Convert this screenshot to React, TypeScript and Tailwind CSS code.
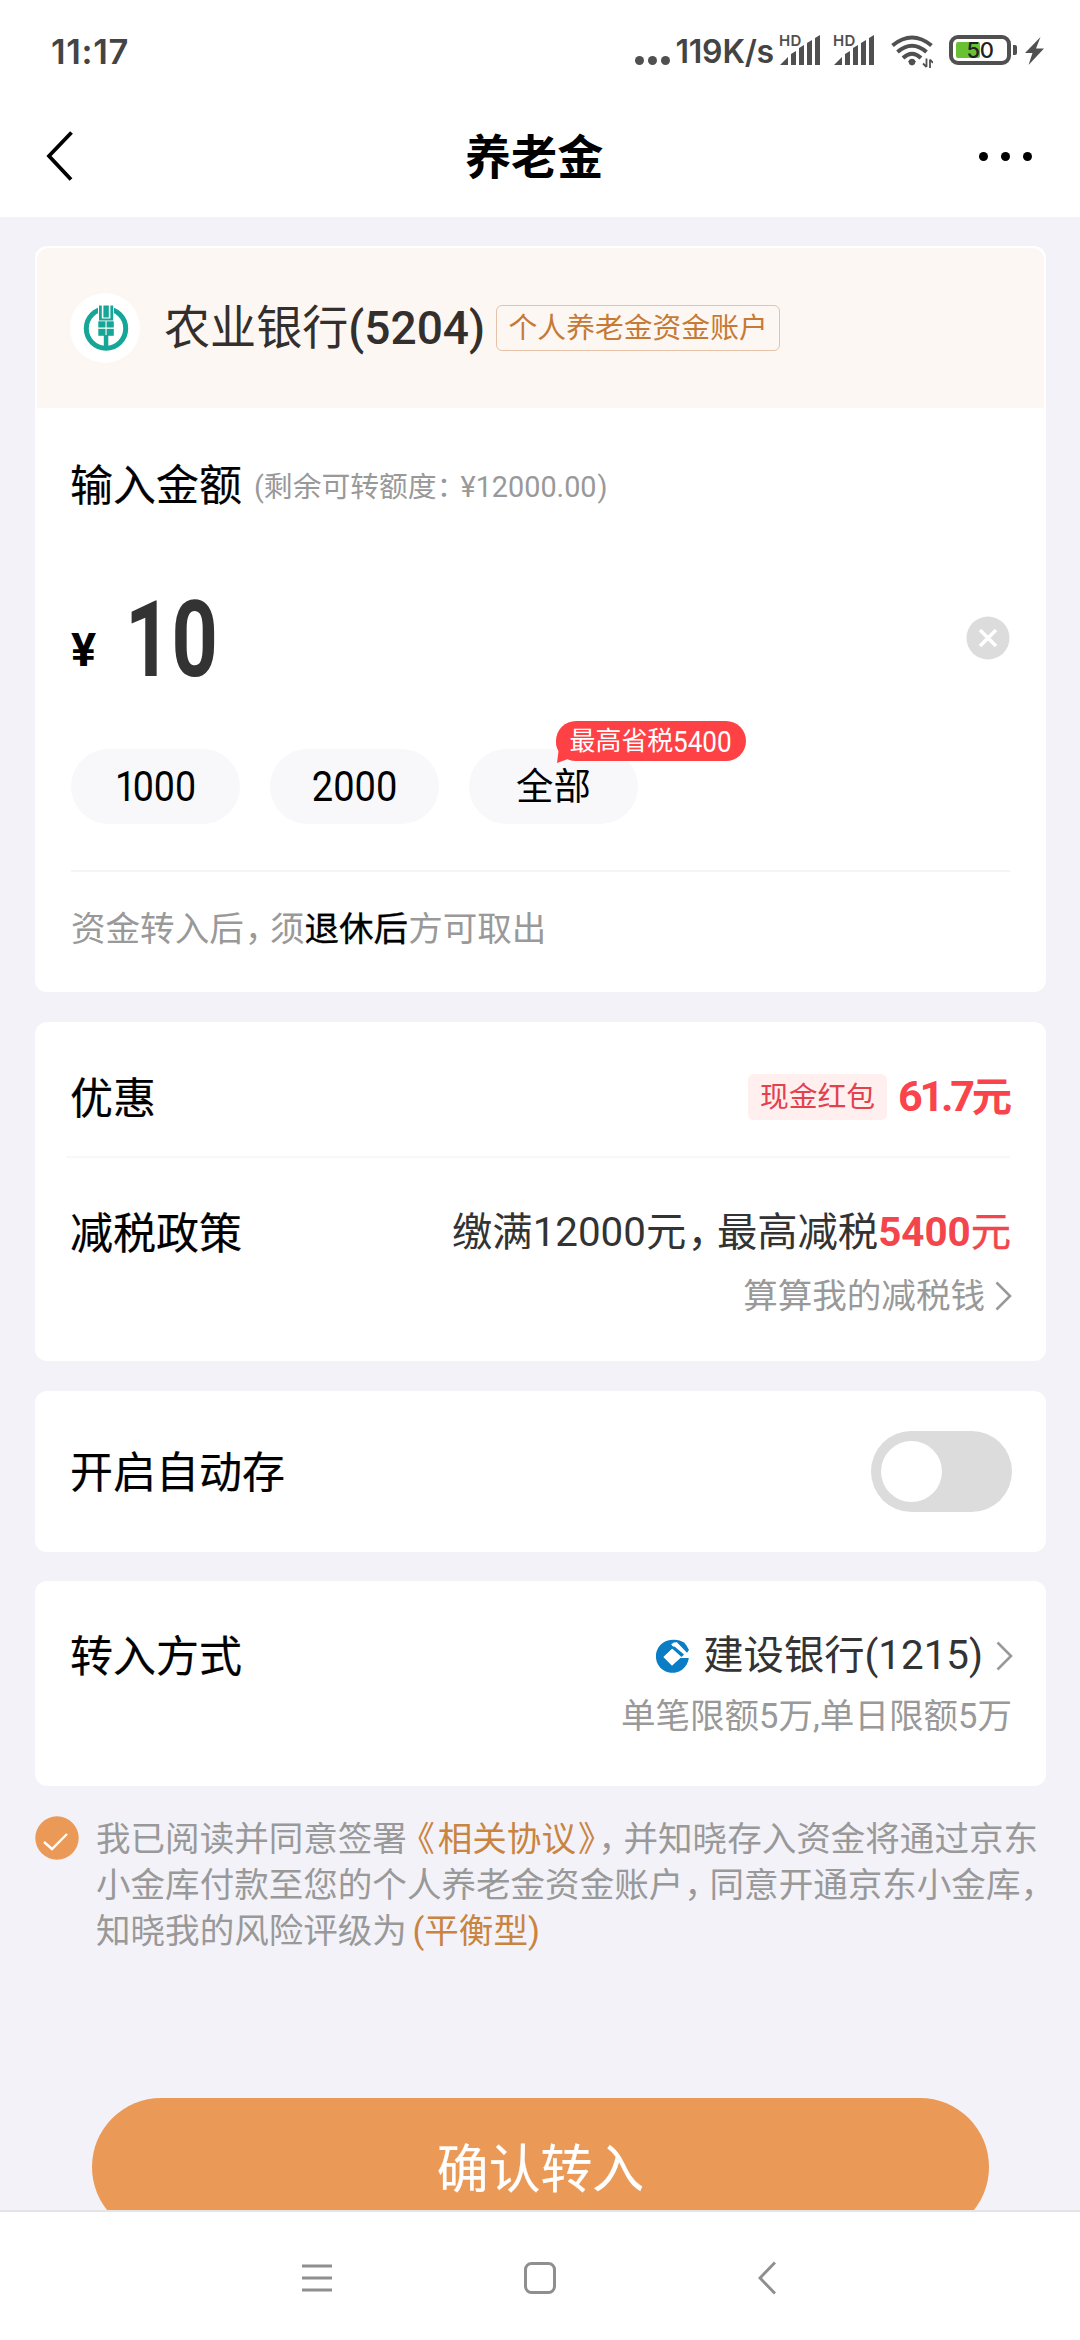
import type { ReactNode } from "react";

const SIGNAL_BARS = ["0,30 8,22 8,30", "11,19 16,16 16,30 11,30", "19,13 24,10 24,30 19,30", "27,8 32,5 32,30 27,30", "35,3 40,0 40,30 35,30"];

function Signal() {
  return (
    <div className="relative h-[30px] w-[41px]">
      <svg viewBox="0 0 41 30" className="h-[30px] w-[41px]" fill="#505050">
        {SIGNAL_BARS.map((points) => (
          <polygon key={points} points={points} />
        ))}
      </svg>
      <span className="absolute -left-[1px] -top-[2px] font-[Inter] text-[15px] font-semibold leading-none tracking-[0.2px] text-[#505050]">
        HD
      </span>
    </div>
  );
}

function WifiIcon() {
  return (
    <svg viewBox="0 0 42 34" className="h-[34px] w-[42px]" fill="none" stroke="#505050" strokeWidth="4">
      <path d="M1.5 10.5 Q21 -5.5 40.5 10.5" />
      <path d="M6.5 17 Q21 4.5 35.5 17" />
      <path d="M12 23 Q21 14.5 30 23" />
      <path d="M17 26.5 Q21 22.5 25 26.5 L21 30.5 Z" fill="#505050" stroke="none" />
      <circle cx="21" cy="27" r="3.2" fill="#505050" stroke="none" />
      <path d="M35.5 23.5 V32 M35.5 32 L32 28.5 M39 33 V24.5 M39 24.5 L42 28" strokeWidth="1.8" />
    </svg>
  );
}

function Battery() {
  return (
    <div className="flex items-center">
      <div className="relative flex h-[30px] w-[62px] items-center rounded-[9px] border-4 border-[#505050]">
        <div className="ml-[3px] h-4 w-6 rounded-[2px] bg-[#67c132]" />
        <span className="absolute inset-0 flex items-center justify-center font-[Inter] text-[22px] font-medium leading-none tracking-[-0.5px] text-[#222]">
          50
        </span>
      </div>
      <div className="ml-[2px] h-[10px] w-1 rounded-r-[2px] bg-[#505050]" />
    </div>
  );
}

function StatusBar() {
  return (
    <div className="flex h-[100px] items-start pl-[51px] pr-[36px] pt-[35px] font-[Inter] text-[#444]">
      <span className="text-[34.5px] font-semibold leading-[34px] tracking-[0.7px]">11:17</span>
      <div className="ml-auto flex h-[33px] items-start">
        <div className="mr-[5px] mt-[21px] flex gap-1">
          <i className="size-[9px] rounded-full bg-[#505050]" />
          <i className="size-[9px] rounded-full bg-[#505050]" />
          <i className="size-[9px] rounded-full bg-[#505050]" />
        </div>
        <span className="mr-[6px] text-[32px] font-semibold leading-[34px] tracking-[-0.2px]">119K/s</span>
        <Signal />
        <div className="w-[13px]" />
        <Signal />
        <div className="w-[16px]" />
        <WifiIcon />
        <div className="w-[16px]" />
        <Battery />
        <svg viewBox="0 0 19 28" className="ml-2 mt-[2px] h-[28px] w-[19px]" fill="#505050">
          <path d="M15.5 0 L0 16 H7.5 L3.5 28 L19 11.5 H11 Z" />
        </svg>
      </div>
    </div>
  );
}

function TitleBar() {
  return (
    <div className="flex h-[117px] items-center pb-[5px] pl-[45px] pr-[48px]">
      <svg viewBox="0 0 28 50" className="h-[50px] w-[28px]" fill="none" stroke="#000" strokeWidth="3.8">
        <path d="M26.5 1.5 L4 25 L26 48.5" />
      </svg>
      <h1 className="ml-[392px] pt-[5px] text-[46.08px] font-bold leading-none text-black">养老金</h1>
      <div className="ml-auto flex gap-[13px]">
        <i className="size-[9px] rounded-full bg-black" />
        <i className="size-[9px] rounded-full bg-black" />
        <i className="size-[9px] rounded-full bg-black" />
      </div>
    </div>
  );
}

function Card({ className = "", children }: { className?: string; children: ReactNode }) {
  return <section className={`rounded-xl bg-white ${className}`}>{children}</section>;
}

function Label({ children }: { children: ReactNode }) {
  return <span className="-ml-px pt-[4px] text-[43px] leading-none text-black [-webkit-text-stroke:0.2px]">{children}</span>;
}

function Chevron() {
  return (
    <svg viewBox="0 0 17 30" className="h-[30px] w-[17px]" fill="none" stroke="#999" strokeWidth="2.6">
      <path d="M1.5 1.5 L15 15 L1.5 28.5" />
    </svg>
  );
}

// full-width comma, tightened to three quarters of an em
function Comma() {
  return <span className="ml-[0.03em] -tracking-[0.27em]">，</span>;
}

function AbcLogo() {
  return (
    <svg viewBox="0 0 70 70" className="size-[70px]">
      <circle cx="35" cy="35" r="35" fill="#fff" />
      <circle cx="36" cy="35.5" r="19.7" fill="none" stroke="#16a697" strokeWidth="5" />
      <rect x="28" y="11" width="16" height="16" fill="#fff" />
      <g fill="#16a697">
        <path d="M29 12.5 H31.8 V25.5 H40.4 V12.5 H43.2 V27.5 H29 Z" />
        <rect x="33.4" y="12.5" width="5.4" height="12" />
        <rect x="28.3" y="28.3" width="7.2" height="6.2" />
        <rect x="36.6" y="28.3" width="7.2" height="6.2" />
        <rect x="28.3" y="35.8" width="7.2" height="7" />
        <rect x="36.6" y="35.8" width="7.2" height="7" />
        <rect x="33.8" y="42" width="4.5" height="14" />
      </g>
    </svg>
  );
}

function CcbLogo() {
  return (
    <svg viewBox="0 0 34 34" className="size-[34px]">
      <path d="M23 2.2 A16.5 16.5 0 1 0 32.8 19 H24.5 L16 26.5 L7.5 18 L16.5 9.5 L21 13 L25.5 15 L15 5 Z" fill="#0b7dc4" />
      <path d="M16.5 9.5 L7.5 18 L16 26.5 L24.5 18 Z" fill="#fff" />
      <path d="M15.8 6.2 L28 18 H33 L32.5 16 L18 3 Z" fill="#fff" />
      <path d="M14.5 8 L18.5 7.5 L28 15.5 L25.5 18 Z" fill="#0b7dc4" />
      <path d="M18.5 0.8 Q29 0.5 33 11 L31 13.8 Z" fill="#0b7dc4" />
    </svg>
  );
}

function Chip({ children }: { children: ReactNode }) {
  return (
    <button className="relative flex h-[75px] w-[169px] items-center justify-center rounded-full bg-[#f8f8fb] text-[43.2px] leading-none text-black">
      {children}
    </button>
  );
}

function AmountCard() {
  return (
    <Card className="h-[746px] overflow-hidden">
      <div className="mx-[2px] mt-[2px] flex h-[160px] items-center rounded-t-xl bg-[#fdf7f3] pl-[33px]">
        <AbcLogo />
        <span className="ml-[24px] text-[46.08px] leading-none text-[#332f2d]">
          农业银行<b className="font-medium">(5204)</b>
        </span>
        <span className="ml-[11px] flex h-[46px] w-[284px] items-center justify-center rounded-md border-[1.5px] border-[#e6c3a8] text-[28.8px] leading-none text-[#c67a35]">
          个人养老金资金账户
        </span>
      </div>
      <div className="pl-[36px] pr-[34px]">
        <div className="mt-[46px] flex h-[60px] items-center leading-none">
          <Label>输入金额</Label>
          <span className="ml-[12px] pt-[7px] text-[28.8px] text-[#999]">
            (剩余可转额度<span className="-tracking-[0.17em]">：</span>¥12000.00<span className="ml-px">)</span>
          </span>
        </div>
        <div className="mt-[74px] flex h-[100px] items-center justify-between">
          <div className="flex items-end">
            <span className="-translate-y-[6px] text-[47px] font-bold leading-[64px] text-black">¥</span>
            <span className="ml-[29px] origin-left translate-y-[3px] scale-x-[0.77] text-[105px] font-bold leading-[100px] text-[#333]">10</span>
          </div>
          <svg viewBox="0 0 44 44" className="mr-[2px] size-[44px]">
            <circle cx="22" cy="22" r="21.5" fill="#dcdcdc" />
            <path d="M14 14 L30 30 M30 14 L14 30" stroke="#fff" strokeWidth="3.6" />
          </svg>
        </div>
        <div className="mt-[61px] flex gap-[30px]">
          <Chip>
            <span className="scale-x-[0.87]">
              <span className="-tracking-[4px]">1</span>000
            </span>
          </Chip>
          <Chip>
            <span className="scale-x-[0.88]">2000</span>
          </Chip>
          <Chip>
            <span className="pt-[3px] text-[37.44px]">全部</span>
            <span className="absolute -top-[28px] left-[87px] flex h-[40px] w-[190px] items-center justify-center whitespace-nowrap rounded-full bg-[#fe4145] pt-[2px] text-[25.92px] text-white">
              <svg viewBox="0 0 18 22" className="absolute left-0 top-[20px] h-[22px] w-[18px]" fill="#fe4145">
                <path d="M0 0 Q0 6 2.5 10 L1 22 L12 18 L18 0 Z" />
              </svg>
              <span className="relative">最高省税</span>
              <span className="relative -mr-[6px] origin-left scale-x-90 text-[29px]">5400</span>
            </span>
          </Chip>
        </div>
        <div className="mr-[2px] mt-[46px] h-[2px] bg-[#f5f5f6]" />
        <p className="flex h-[114px] items-center text-[34.56px] leading-none text-[#999]">
          <span>
            资金转入后<Comma />须<span className="text-black [-webkit-text-stroke:0.3px]">退休后</span>方可取出
          </span>
        </p>
      </div>
    </Card>
  );
}

function BenefitCard() {
  return (
    <Card className="h-[339px] pl-[36px] pr-[34px] leading-none">
      <div className="flex h-[134px] items-center justify-between pt-[16px]">
        <Label>优惠</Label>
        <div className="flex items-center">
          <span className="flex h-[46px] w-[139px] items-center justify-center rounded-md bg-[#ffefee] text-[28.8px] text-[#e2424c]">
            现金红包
          </span>
          <span className="ml-[11px] text-[40.32px] font-bold text-[#f8444a]">
            <span className="text-[43.2px] -tracking-[3.3px]">61.7</span>元
          </span>
        </div>
      </div>
      <div className="-ml-[5px] mr-[2px] h-[2px] bg-[#f8f8f9]" />
      <div className="mr-px mt-[44px] flex h-[60px] items-center justify-between">
        <Label>减税政策</Label>
        <span className="pt-[3px] text-[40.32px] text-[#333]">
          缴满12000元<Comma />最高减税<b className="font-bold text-[#f2464c]">5400</b>
          <span className="text-[#f2464c] [-webkit-text-stroke:0.4px]">元</span>
        </span>
      </div>
      <div className="mt-[9px] flex h-[50px] items-center justify-end gap-[10px] text-[34.56px] text-[#999]">
        算算我的减税钱
        <Chevron />
      </div>
    </Card>
  );
}

function TransferCard() {
  return (
    <Card className="h-[205px] pl-[36px] pr-[33px] leading-none">
      <div className="flex h-[148px] items-center justify-between">
        <Label>转入方式</Label>
        <div className="flex items-center pt-[2px] text-[40.32px] text-[#333]">
          <CcbLogo />
          <span className="ml-[13px] mr-[13px]">建设银行(1215)</span>
          <Chevron />
        </div>
      </div>
      <p className="-mt-[30px] mr-px text-right text-[34.56px] text-[#999]">单笔限额5万,单日限额5万</p>
    </Card>
  );
}

function Agreement() {
  return (
    <div className="mt-[29px] flex">
      <svg viewBox="0 0 44 44" className="mt-px size-[44px] shrink-0">
        <circle cx="22" cy="22" r="21.7" fill="#ea9956" />
        <path d="M9 26 L17 33 L32 18" fill="none" stroke="#fff" strokeWidth="2.4" />
      </svg>
      <p className="ml-[17px] whitespace-nowrap pt-px text-[34.56px] leading-[46px] text-[#999] [text-spacing-trim:space-all]">
        我已阅读并同意签署{" "}
        <span className="text-[#c98441]">
          <span className="ml-[2px] mr-[3px] [font-feature-settings:'halt']">《</span>相关协议
          <span className="ml-[2px] mr-[2px] [font-feature-settings:'halt']">》</span>
        </span>
        <Comma />并知晓存入资金将通过京东
        <br />
        小金库付款至您的个人养老金资金账户<Comma />同意开通京东小金库，
        <br />
        知晓我的风险评级为 <span className="-ml-[3px] text-[#c98441]">(平衡型)</span>
      </p>
    </div>
  );
}

function NavBar() {
  return (
    <nav className="flex h-[130px] shrink-0 items-center border-t-2 border-[#e4e4e6] bg-white pl-[301px] pt-[3px]">
      <svg viewBox="0 0 32 34" className="h-[34px] w-[32px]" stroke="#8f8f8f" strokeWidth="3">
        <path d="M1 5 H31 M1 17 H31 M1 29 H31" />
      </svg>
      <svg viewBox="0 0 34 34" className="ml-[190px] size-[34px]" fill="none" stroke="#8f8f8f" strokeWidth="3">
        <rect x="2.5" y="2.5" width="29" height="29" rx="6" />
      </svg>
      <svg viewBox="0 0 18 34" className="ml-[201px] h-[34px] w-[18px]" fill="none" stroke="#8f8f8f" strokeWidth="3">
        <path d="M17 1.5 L2 17 L17 32.5" />
      </svg>
    </nav>
  );
}

export default function App() {
  return (
    <div className="flex h-[2340px] w-[1080px] flex-col overflow-hidden bg-[#f3f2f8] font-[Roboto,'Noto_Sans_CJK_SC',sans-serif]" lang="zh-CN">
      <header className="shrink-0 bg-white">
        <StatusBar />
        <TitleBar />
      </header>
      <main className="min-h-0 flex-1 overflow-hidden pl-[35px] pr-[34px] pt-[29px]">
        <AmountCard />
        <div className="h-[30px]" />
        <BenefitCard />
        <div className="h-[30px]" />
        <Card className="flex h-[161px] items-center justify-between pl-[36px] pr-[34px]">
          <Label>开启自动存</Label>
          <button className="flex h-[81px] w-[141px] items-center rounded-full bg-[#dcdcdc] pl-[10px]">
            <span className="size-[61px] rounded-full bg-white" />
          </button>
        </Card>
        <div className="h-[29px]" />
        <TransferCard />
        <Agreement />
        <button className="ml-[57px] mt-[144px] h-[138px] w-[897px] rounded-full bg-[#ea9956] pt-[7px] text-[51.84px] leading-none text-white [-webkit-text-stroke:0.2px]">
          确认转入
        </button>
      </main>
      <NavBar />
    </div>
  );
}
